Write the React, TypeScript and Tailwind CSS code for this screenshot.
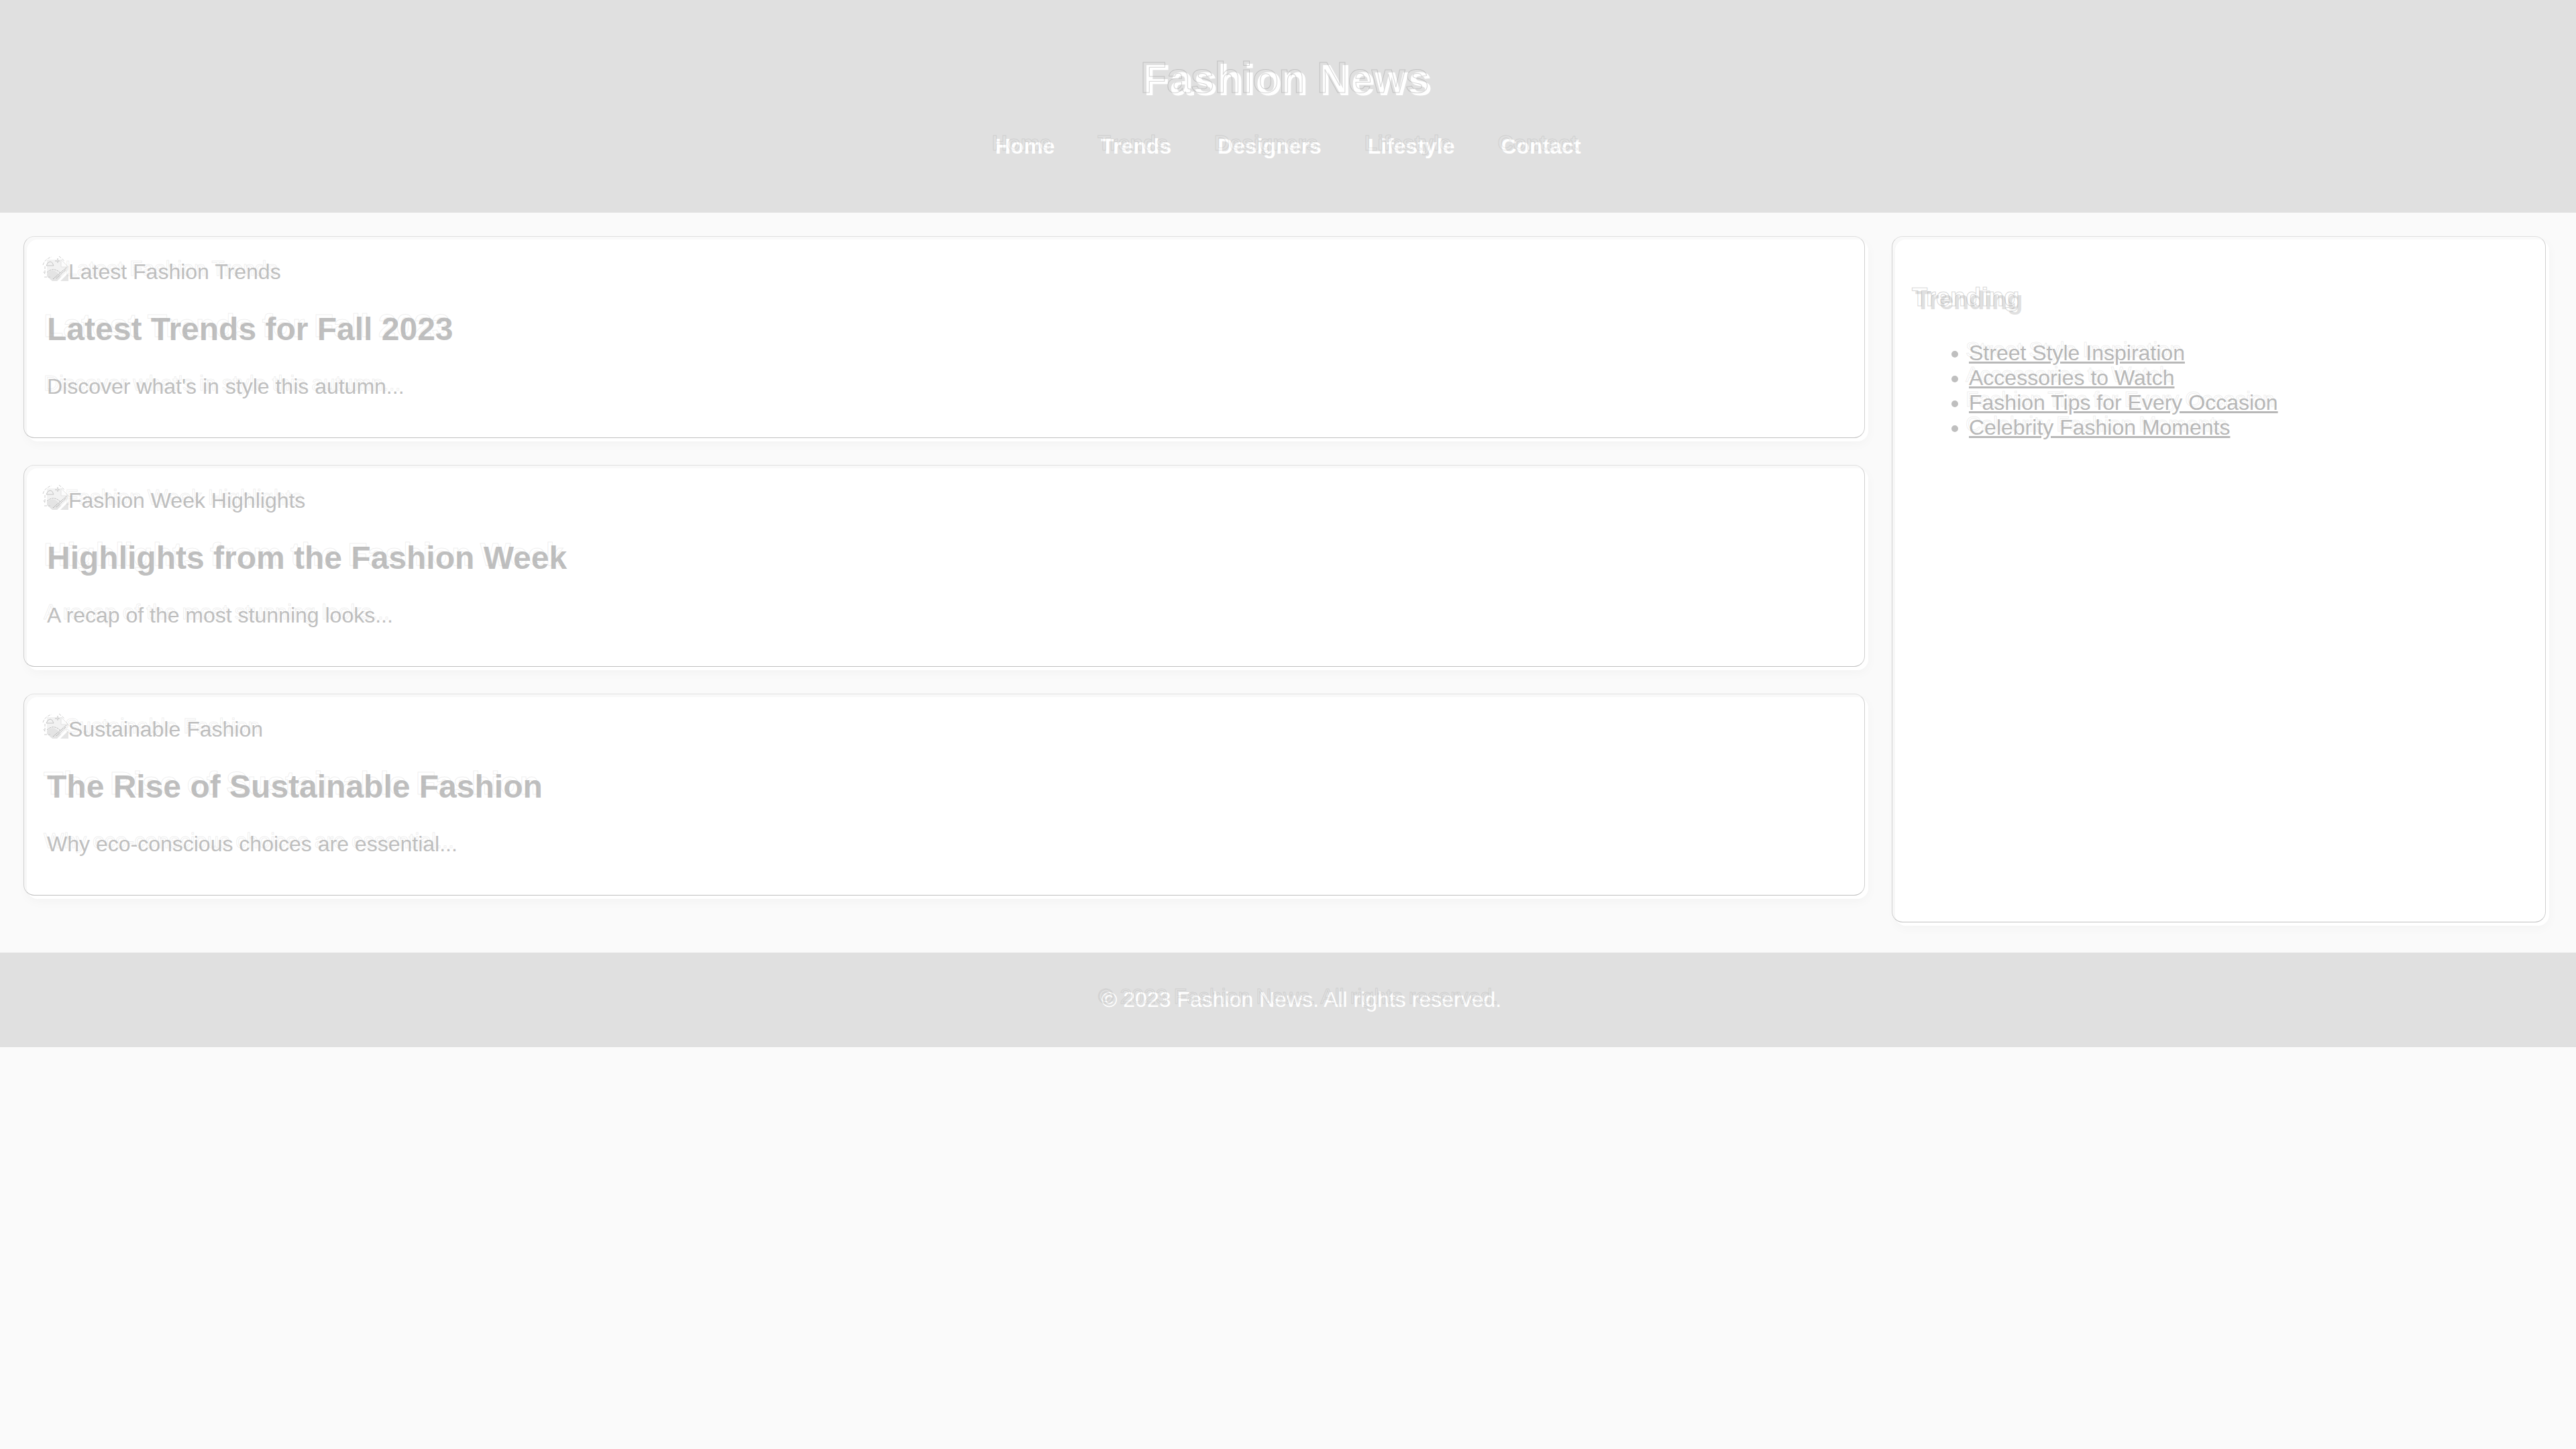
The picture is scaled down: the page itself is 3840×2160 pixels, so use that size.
const ghost =
  "relative before:pointer-events-none before:absolute before:-left-[5px] before:-top-[5px] before:whitespace-nowrap before:text-transparent before:content-[attr(data-text)]";
const ghostTitle = `${ghost} before:[-webkit-text-stroke:1px_#90909060]`;
const ghostDark = `${ghost} before:[-webkit-text-stroke:1px_#90909038]`;
const ghostLight = `${ghost} before:[-webkit-text-stroke:1px_#a0a0a030]`;

const panel =
  "relative rounded-[16px] bg-white shadow-[0_4px_16px_rgba(0,0,0,0.03)] after:pointer-events-none after:absolute after:-left-[5px] after:-top-[5px] after:h-full after:w-full after:rounded-[16px] after:border after:border-[#d0d0d0] after:border-t-[#e0e0e0] after:border-b-[#c0c0c0] after:content-['']";

const links = ["Home", "Trends", "Designers", "Lifestyle", "Contact"];

const articles = [
  {
    alt: "Latest Fashion Trends",
    title: "Latest Trends for Fall 2023",
    text: "Discover what's in style this autumn...",
  },
  {
    alt: "Fashion Week Highlights",
    title: "Highlights from the Fashion Week",
    text: "A recap of the most stunning looks...",
  },
  {
    alt: "Sustainable Fashion",
    title: "The Rise of Sustainable Fashion",
    text: "Why eco-conscious choices are essential...",
  },
];

const trending = [
  "Street Style Inspiration",
  "Accessories to Watch",
  "Fashion Tips for Every Occasion",
  "Celebrity Fashion Moments",
];

function MissingImage() {
  return (
    <svg className="h-8 w-8 shrink-0 overflow-visible" viewBox="0 0 32 32" fill="none" aria-hidden="true">
      <path d="M0 0H21L32 11V15L15 32H8L0 25Z" fill="#f2f2f2" />
      <path d="M21 0V11H32Z" fill="#fcfcfc" stroke="#e2e2e2" />
      <path d="M0 20Q11 10 21 26L15 32H8L0 25Z" fill="#e4e4e4" />
      <path d="M32 20V32H20Z" fill="#e4e4e4" />
      <path d="M-1 9H10Q8 3 5 3Q1 3 -1 9" stroke="#c4c4c4" />
      <path d="M0 19Q10 10 20 20M16 -2V6M12 2H20" stroke="#bdbdbd" strokeDasharray="3 1" />
      <path d="M9 29L29 12M14 28L28 15" stroke="#a8a8a8" strokeDasharray="2 1" />
      <path d="M-6 8Q-3 -1 7 -4M18 -5L27 3M-5 18L-2 23M-4 26H5M-3 10V22" stroke="#cccccc" strokeDasharray="4 2" />
    </svg>
  );
}

export default function App() {
  return (
    <div className="min-h-screen bg-[#fafafa] font-['Liberation_Sans',Arial,sans-serif] text-[32px] leading-[normal] text-[#bfbfbf]">
      <header className="bg-[#e0e0e0] p-10 text-center font-bold text-white">
        <h1 className="my-[43px] text-[64px]">
          <span className={ghostTitle} data-text="Fashion News">Fashion News</span>
        </h1>
        <nav className="pb-10">
          <ul>
            {links.map((name) => (
              <li key={name} className="inline">
                <a href="#" className={`mx-[30px] ${ghostDark}`} data-text={name}>{name}</a>{" "}
              </li>
            ))}
          </ul>
        </nav>
      </header>

      <div className="flex gap-10 p-10">
        <main className="flex-[3]">
          {articles.map((a) => (
            <article key={a.title} className={`mb-10 p-[30px] ${panel}`}>
              <div className="flex">
                <MissingImage />
                <span className={ghostLight} data-text={a.alt}>{a.alt}</span>
              </div>
              <h2 className="my-10 text-[48px] leading-[54px] font-bold">
                <span className={ghostLight} data-text={a.title}>{a.title}</span>
              </h2>
              <p className="mb-[33px]">
                <span className={ghostLight} data-text={a.text}>{a.text}</span>
              </p>
            </article>
          ))}
        </main>

        <aside className={`flex-1 p-[30px] ${panel}`}>
          <h3 className="mt-10 mb-[38px] text-[38px] font-bold text-[#e0e0e0]">
            <span className={ghostTitle} data-text="Trending">Trending</span>
          </h3>
          <ul className="list-disc pl-20">
            {trending.map((t) => (
              <li key={t}>
                <a href="#" className={`text-[#b8b8b8] underline ${ghostLight}`} data-text={t}>{t}</a>
              </li>
            ))}
          </ul>
        </aside>
      </div>

      <footer className="bg-[#e0e0e0] py-5 pl-10 text-center text-white">
        <p className="my-8">
          <span className={ghostDark} data-text="© 2023 Fashion News. All rights reserved.">
            © 2023 Fashion News. All rights reserved.
          </span>
        </p>
      </footer>
    </div>
  );
}
